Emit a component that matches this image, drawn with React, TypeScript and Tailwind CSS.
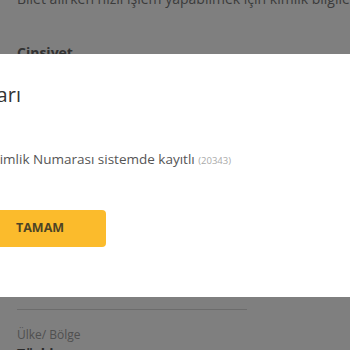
export default function App() {
  return (
    <div className="relative w-[350px] h-[350px] overflow-hidden bg-white" style={{ fontFamily: '"Open Sans", sans-serif' }}>
      <div className="px-[17px] mt-[-13px]">
        <p className="text-[14px] leading-[24px] text-[#777] whitespace-nowrap">Bilet alırken hızlı işlem yapabilmek için kimlik bilgilerinizi</p>
        <p className="mt-[32px] text-[14px] leading-[20px] font-bold text-[#666]">Cinsiyet</p>
        <div className="mt-[246px] w-[230px] h-px bg-[#d8d8d8]" />
        <p className="mt-[16px] text-[12px] leading-[18px] text-[#a0a0a0]">Ülke/ Bölge</p>
        <p className="text-[14px] leading-[20px] font-bold text-[#555]">Türkiye</p>
      </div>
      <div className="absolute inset-0 bg-black/50" />
      <div className="absolute top-[54px] left-[-46px] w-[460px] h-[243px] bg-white px-[18px] pt-[27px]">
        <h2 className="text-[20px] leading-[28px] text-[#333]">Uyarı</h2>
        <p className="mt-[40px] text-[13.5px] leading-[20px] text-[#555] whitespace-nowrap">
          TC Kimlik Numarası sistemde kayıtlı <span className="text-[9.5px] text-[#aaa]">(20343)</span>
        </p>
        <button className="mt-[39px] ml-[-18px] w-[152px] h-[37px] rounded-[4px] bg-[#fbbb2c] pl-[62px] text-left text-[12.5px] font-bold text-[#4d4425]">
          TAMAM
        </button>
      </div>
    </div>
  );
}
